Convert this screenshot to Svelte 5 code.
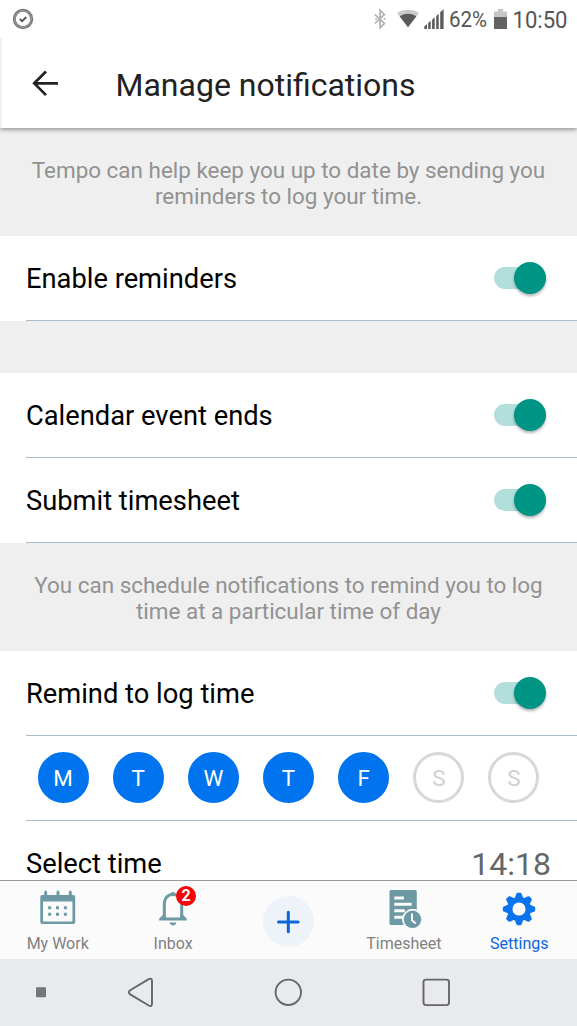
<script>
  let reminders = $state(true)
  let calendarEvents = $state(true)
  let submitTimesheet = $state(true)
  let logTime = $state(true)

  let days = $state([
    { name: 'M', active: true },
    { name: 'T', active: true },
    { name: 'W', active: true },
    { name: 'T', active: true },
    { name: 'F', active: true },
    { name: 'S', active: false },
    { name: 'S', active: false },
  ])

  const teeth = [0, 45, 90, 135, 180, 225, 270, 315]
</script>

{#snippet toggleRow(label, on, toggle)}
  <div class="row">
    <span class="label">{label}</span>
    <button class="switch" class:on onclick={toggle} aria-label={label}>
      <span class="knob"></span>
    </button>
  </div>
{/snippet}

<div class="phone">
  <div class="status">
    <svg class="check" width="22" height="22" viewBox="0 0 22 22" fill="none">
      <circle cx="11" cy="11" r="8.7" stroke="#777" stroke-width="3" />
      <circle cx="11" cy="11" r="8.4" stroke="#b5b5b5" stroke-width=".7" />
      <path d="M7.8 11l2.3 2.2 4.2-4.2" stroke="#555" stroke-width="1.9" />
    </svg>
    <svg width="203" height="38" viewBox="374 1 203 38">
      <path d="M374.8 14.5l9.6 9-4.3 4.3V10.2l4.3 4.3-9.6 9" transform="translate(0 1)" fill="none" stroke="#b0b0b0" stroke-width="1.7" />
      <path d="M375.3 19.8h1.6M383.8 19.8h1.6" stroke="#b0b0b0" stroke-width="1.7" />
      <path d="M397 13.7Q408 7.7 419 13.7L408 28.2z" fill="#c9c9c9" />
      <path d="M399.6 17.2Q408 12.5 416.4 17.2L408 28.2z" fill="#5b5b5b" />
      <path d="M424.3 30v-2.6l2.7-2.3V30zM428.2 30v-6l2.5-2.2V30zM432.1 30v-9.3l2.6-2.4V30zM436.2 30v-13l2.5-2.3V30zM440.2 30V13.300l3.400-3V30z" fill="#5b5b5b" />
      <path d="M494 12.500h4V10h5v2.500h4V18h-13z" fill="#c6c6c6" />
      <path d="M494 18h13v12h-13z" fill="#626262" />
      <text x="449" y="28" font-size="21.500" textLength="38" lengthAdjust="spacingAndGlyphs">62%</text>
      <text x="512.500" y="28.500" font-size="23.500" textLength="55" lengthAdjust="spacingAndGlyphs">10:50</text>
    </svg>
  </div>

  <header>
    <svg width="28" height="28" viewBox="0 0 28 28" fill="none" stroke="#222" stroke-width="2.7">
      <path d="M27 14.300H3.500M15 2.500L3.200 14.300 15 26.100" />
    </svg>
    <h1>Manage notifications</h1>
  </header>

  <main>
    <p class="hint">Tempo can help keep you up to date by sending you<br />reminders to log your time.</p>
    {@render toggleRow('Enable reminders', reminders, () => (reminders = !reminders))}
    <div class="spacer"></div>
    {@render toggleRow('Calendar event ends', calendarEvents, () => (calendarEvents = !calendarEvents))}
    {@render toggleRow('Submit timesheet', submitTimesheet, () => (submitTimesheet = !submitTimesheet))}
    <p class="hint">You can schedule notifications to remind you to log<br />time at a particular time of day</p>
    {@render toggleRow('Remind to log time', logTime, () => (logTime = !logTime))}
    <div class="row days">
      {#each days as day}
        <button class="day" class:active={day.active} onclick={() => (day.active = !day.active)}>
          {day.name}
        </button>
      {/each}
    </div>
    <div class="row last">
      <span class="label">Select time</span>
      <span class="time">14:18</span>
    </div>
  </main>

  <nav class="tabs">
    <div class="tab">
      <svg width="36" height="36" viewBox="0 -.6 36 36.6">
        <path fill="#6c99a3" fill-rule="evenodd" d="M0 6.500q0-2 2-2h2V2q0-2 1.500-2T7 2v2.500h9.500V2q0-2 1.500-2t1.500 2v2.500H29V2q0-2 1.500-2T32 2v2.500h1.500q2 0 2 2V32q0 2-2 2H2q-2 0-2-2zM2.800 11v20.300h29.900V11z" />
        <path stroke="#6c99a3" stroke-width="3" stroke-dasharray="3 5" d="M8 17.500h19.500M8 24h19.500" />
      </svg>
      <span>My Work</span>
    </div>
    <div class="tab">
      <div class="bell">
        <svg width="28" height="36" viewBox="0 0 28 36">
          <path d="M5.300 27.500V14.500C5.300 8 9 4.500 14 4.500s8.700 3.500 8.700 10v13" fill="none" stroke="#6c99a3" stroke-width="3" />
          <path d="M11.500 5V4Q11.500 2 14 2t2.500 2V5zM.2 30.500v-1.700L3.800 25h3v2.600h14.400V25h3l3.600 3.800v1.700zM10.500 32.500h7q-1 3-3.500 3t-3.500-3z" fill="#6c99a3" />
        </svg>
        <span class="badge">2</span>
      </div>
      <span>Inbox</span>
    </div>
    <div class="tab">
      <button class="add" aria-label="Add">
        <svg width="24" height="24" viewBox="0 0 24 24" stroke="#0b66d8" stroke-width="3" stroke-linecap="round">
          <path d="M12.300 2.200v19.600M2.500 12h19.600" />
        </svg>
      </button>
    </div>
    <div class="tab">
      <svg class="sheet" width="34" height="38" viewBox="0 0 34 38">
        <path d="M2 0h24q1.800 0 1.800 1.800V35H2q-1.500 0-1.500-1.500v-32Q.5 0 2 0z" fill="#6c99a3" />
        <path d="M5.300 8h9.600M5.300 14.300h17.400M5.300 20.800h10.500M5.300 27.300h9" stroke="#fbfbfb" stroke-width="3" />
        <circle cx="23.500" cy="29.300" r="10.500" fill="#fbfbfb" />
        <circle cx="23.500" cy="29.300" r="8.700" fill="#6c99a3" />
        <path d="M23 23.500v6.800l3.700 3.300" fill="none" stroke="#fbfbfb" stroke-width="2" />
      </svg>
      <span>Timesheet</span>
    </div>
    <div class="tab current">
      <svg class="gear" width="34" height="34" viewBox="-17 -17 34 34">
        <circle r="9.300" fill="none" stroke="#0b73ee" stroke-width="5.500" />
        {#each teeth as angle}
          <path d="M-4.400-10.500L-2.600-15.300Q-2.300-16.200-1.500-16.200h3q.8 0 1.100.9L4.400-10.500z" fill="#0b73ee" transform="rotate({angle})" />
        {/each}
      </svg>
      <span>Settings</span>
    </div>
  </nav>

  <div class="system">
    <svg width="577" height="67" viewBox="0 0 577 67" fill="none" stroke="#656668" stroke-width="1.9">
      <rect x="36" y="28.300" width="10" height="10" rx="1" fill="#757678" stroke="none" />
      <path d="M130.200 31.300l18.500-11.100q3.300-1.600 3.300 1.700v22.900q0 3.300-3.300 1.700l-18.500-11.100q-2.700-2.050 0-4.100z" />
      <circle cx="288.300" cy="33.300" r="12.700" />
      <rect x="423.500" y="20.600" width="25.500" height="25.500" rx="2.500" />
    </svg>
  </div>
</div>

<style>
  :global(body) {
    margin: 0;
    background: #fff;
  }
  .phone {
    width: 577px;
    height: 1026px;
    display: flex;
    flex-direction: column;
    overflow: hidden;
    background: #fff;
    font-family: Roboto, sans-serif;
  }
  button {
    border: 0;
    padding: 0;
    font: inherit;
  }
  .status {
    height: 38px;
    flex: none;
    display: flex;
    align-items: center;
    justify-content: space-between;
    padding-left: 12px;
    box-sizing: border-box;
    fill: #555;
  }
  .check {
    fill: none;
  }
  header {
    height: 90px;
    flex: none;
    display: flex;
    align-items: center;
    gap: 56.5px;
    padding-left: 29px;
    border-left: 2px solid #f0f0f0;
    box-sizing: border-box;
    box-shadow: 0 2px 4px rgba(0, 0, 0, 0.35);
    clip-path: inset(0 0 -10px 0);
    z-index: 1;
  }
  h1 {
    margin: 4px 0 0;
    font-size: 32px;
    font-weight: 400;
    color: #222;
  }
  main {
    flex: 1;
    min-height: 0;
    overflow: hidden;
  }
  .hint {
    height: 108px;
    margin: 0;
    padding-top: 29px;
    box-sizing: border-box;
    background: #efefef;
    color: #929292;
    font-size: 22.45px;
    line-height: 26.4px;
    text-align: center;
    white-space: nowrap;
  }
  .row {
    height: 85px;
    margin-left: 26px;
    padding-right: 31px;
    display: flex;
    align-items: center;
    justify-content: space-between;
    box-sizing: border-box;
    border-bottom: 1px solid #a9bfc8;
  }
  .label {
    font-size: 27.3px;
    line-height: 30px;
    color: #000;
    padding-top: 2px;
  }
  .spacer {
    height: 52px;
    background: #efefef;
  }
  .switch {
    width: 52px;
    height: 22px;
    border-radius: 11px;
    background: #ccc;
    display: flex;
    align-items: center;
  }
  .switch.on {
    background: #b2dfdb;
    justify-content: flex-end;
  }
  .knob {
    width: 32px;
    height: 32px;
    flex: none;
    border-radius: 50%;
    background: #fafafa;
    box-shadow: 0 2px 3px rgba(0, 0, 0, 0.3);
  }
  .on .knob {
    background: #009485;
  }
  .days {
    padding: 0 37.5px 1px 11.5px;
  }
  .day {
    width: 51px;
    height: 51px;
    border-radius: 50%;
    border: 3px solid #d8d8d8;
    background: #fff;
    color: #d0d0d0;
    font-size: 22.4px;
  }
  .day.active {
    border-color: #0073ee;
    background: #0073ee;
    color: #fff;
  }
  .last {
    height: 59px;
    padding-top: 25px;
    border-bottom: 0;
  }
  .time {
    font-size: 32px;
    line-height: 30px;
    color: #666;
    margin-right: -5px;
    padding-top: 2px;
  }
  .tabs {
    height: 79px;
    flex: none;
    display: grid;
    grid-template-columns: repeat(5, 1fr);
    border-top: 1px solid #999;
    background: #fbfbfb;
    box-sizing: border-box;
  }
  .tab {
    display: flex;
    flex-direction: column;
    align-items: center;
    justify-content: space-between;
    padding: 9px 0 5px;
    color: #808080;
    font-size: 16px;
    line-height: 20px;
  }
  .current {
    color: #0d65e0;
  }
  .gear {
    margin-top: 2px;
  }
  .sheet {
    margin-left: 4px;
  }
  .bell {
    position: relative;
    height: 36px;
  }
  .badge {
    position: absolute;
    left: 17px;
    top: -4px;
    width: 20px;
    height: 20px;
    border-radius: 50%;
    background: #f50408;
    color: #fff;
    font-size: 16px;
    font-weight: 700;
    text-align: center;
  }
  .add {
    width: 51px;
    height: 51px;
    margin-top: 6px;
    border-radius: 50%;
    background: #edf3f8;
    display: flex;
    align-items: center;
    justify-content: center;
  }
  .system {
    height: 67px;
    flex: none;
    background: #e9eaee;
  }
</style>
